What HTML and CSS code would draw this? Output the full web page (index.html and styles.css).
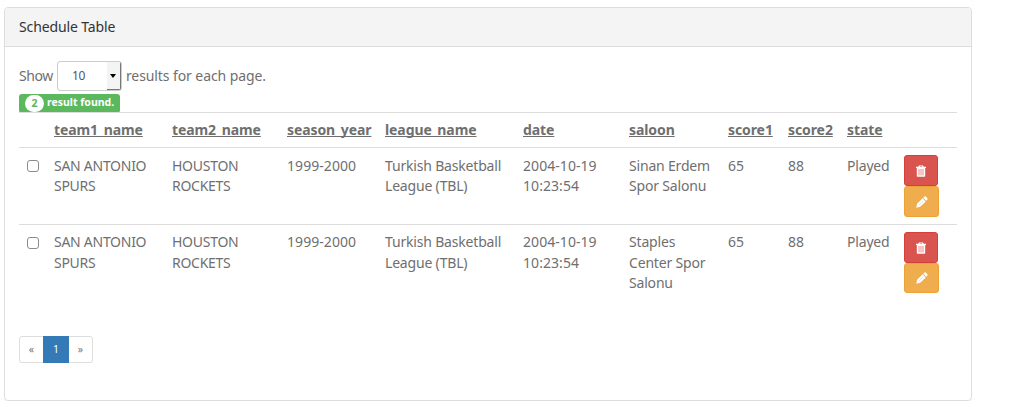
FILE: index.html
```html
<!DOCTYPE html>
<html lang="en">
<head>
<meta charset="utf-8">
<title>Schedule Table</title>
<link rel="stylesheet" href="styles.css">
</head>
<body>
<svg class="defs" width="0" height="0" aria-hidden="true">
  <symbol id="trash" viewBox="0 0 12 12">
    <path fill="#fff" d="M4 .5h4l.8 1.3H11V3H1V1.8h2.200zM5 1.300l-.3.5h2.600L7 1.300zM1.800 3h8.400v8q0 .8-.8.8H2.600q-.8 0-.8-.8z"/>
    <path stroke="#e98b85" d="M4 4v6.500M6 4v6.500M8 4v6.500"/>
  </symbol>
  <symbol id="pencil" viewBox="0 0 12 12">
    <path fill="#fff" d="M.3 11.700l.8-4 5.500-5.400 3.100 3.100-5.500 5.400zM7.200 1.700L8.500.6q.7-.6 1.300 0l1.600 1.600q.6.700 0 1.300l-1.200 1.200z"/>
    <path stroke="#f0ad4e" stroke-width=".4" d="M3.200 8.800l4.200-4.100"/>
  </symbol>
</svg>
<section class="panel">
  <h3 class="panel-heading">Schedule Table</h3>
  <div class="panel-body">
    <div class="length">
      <span>Show</span>
      <span class="select"><span class="select-value">10</span><span class="select-button"></span></span>
      <span class="length-text">results for each page.</span>
    </div>
    <div class="label"><span class="badge">2</span><span>result found.</span></div>
    <table class="table">
      <colgroup><col class="c-check"><col class="c-team1"><col class="c-team2"><col class="c-season"><col class="c-league"><col class="c-date"><col class="c-saloon"><col class="c-score1"><col class="c-score2"><col class="c-state"><col></colgroup>
      <thead>
        <tr><th></th><th><a>team1_name</a></th><th><a>team2_name</a></th><th><a>season_year</a></th><th><a>league_name</a></th><th><a>date</a></th><th><a>saloon</a></th><th><a>score1</a></th><th><a>score2</a></th><th><a>state</a></th><th></th></tr>
      </thead>
      <tbody>
        <tr class="first"><td><span class="check"></span></td><td class="team">SAN ANTONIO<br>SPURS</td><td class="team">HOUSTON<br>ROCKETS</td><td class="num">1999-2000</td><td>Turkish Basketball<br>League (TBL)</td><td class="num">2004-10-19<br>10:23:54</td><td>Sinan Erdem<br>Spor Salonu</td><td class="num">65</td><td class="num">88</td><td>Played</td>
          <td class="tools"><div class="actions"><span class="btn danger"><svg><use href="#trash"/></svg></span><span class="btn warning"><svg><use href="#pencil"/></svg></span></div></td></tr>
        <tr><td><span class="check"></span></td><td class="team">SAN ANTONIO<br>SPURS</td><td class="team">HOUSTON<br>ROCKETS</td><td class="num">1999-2000</td><td>Turkish Basketball<br>League (TBL)</td><td class="num">2004-10-19<br>10:23:54</td><td>Staples<br>Center Spor<br>Salonu</td><td class="num">65</td><td class="num">88</td><td>Played</td>
          <td class="tools"><div class="actions"><span class="btn danger"><svg><use href="#trash"/></svg></span><span class="btn warning"><svg><use href="#pencil"/></svg></span></div></td></tr>
      </tbody>
    </table>
    <div class="pagination"><span class="page arrow">«</span><span class="page active">1</span><span class="page arrow">»</span></div>
  </div>
</section>
</body>
</html>
```
FILE: styles.css
```css
* { box-sizing: border-box; }
body { margin: 0; background: #fff; color: #6f6f6f; font: 14px/20px "Noto Sans", "Open Sans", sans-serif; }
.defs { display: block; }
.panel { width: 968px; height: 394px; margin: 7px 0 0 4px; border: 1px solid #ddd; border-radius: 4px; box-shadow: 0 1px 1px rgba(0,0,0,.06); }
.panel-heading { margin: 0; height: 39px; padding: 9px 14px; font-size: 14px; font-weight: 400; letter-spacing: -.13px; color: #333; background: #f4f4f4; border-bottom: 1px solid #ddd; border-radius: 3px 3px 0 0; }
.panel-body { padding: 14px 14px 0; }
.length { display: flex; align-items: center; height: 30px; gap: 4px; letter-spacing: -.4px; }
.length-text { letter-spacing: -.09px; }
.select { display: flex; justify-content: space-between; width: 65px; height: 30px; border: 1px solid #ccc; border-radius: 3px; overflow: hidden; font-size: 12px; line-height: 28px; letter-spacing: -.2px; color: #555; }
.select-value { padding-left: 14px; }
.select-button { width: 14px; background: #f4f4f4; border-right: 1px solid #777; border-bottom: 1px solid #777; display: flex; align-items: center; justify-content: center; }
.select-button::after { content: ""; border: 3px solid transparent; border-top: 4px solid #000; border-bottom: 0; }
.label { display: flex; align-items: center; gap: 3px; width: 101px; height: 19px; margin-top: 3px; padding: 0 0 0 6px; background: #5cb85c; border-radius: 3px; color: #fff; font: bold 10.5px/16px "Noto Sans", sans-serif; letter-spacing: 0; white-space: nowrap; }
.label > span:last-child { padding-bottom: 3px; }
.badge { width: 19px; height: 17px; line-height: 17px; border-radius: 9px; background: #fff; color: #5cb85c; text-align: center; }
.table { width: 938px; margin-top: -1px; border-collapse: separate; border-spacing: 0; table-layout: fixed; letter-spacing: -.18px; }
.table th, .table td { padding: 7px 0 0 8px; text-align: left; vertical-align: top; border-top: 1px solid #ddd; white-space: nowrap; }
.table th { height: 35px; font-weight: 700; letter-spacing: -.09px; }
.table td { height: 77px; line-height: 20.5px; }
.table .first td { padding-top: 8px; line-height: 20px; }
.table .first .check { margin-top: 4px; }
.table .first .tools { padding-top: 7px; }
.table td.team { letter-spacing: -.27px; }
.table td.num { letter-spacing: .06px; }
.table th a { text-decoration: underline; text-underline-offset: 1px; text-decoration-thickness: 1px; text-decoration-skip-ink: none; }
.c-check { width: 27px; }
.c-team1 { width: 118px; }
.c-team2 { width: 115px; }
.c-season { width: 98px; }
.c-league { width: 138px; }
.c-date { width: 106px; }
.c-saloon { width: 99px; }
.c-score1 { width: 60px; }
.c-score2 { width: 59px; }
.c-state { width: 57px; }
.check { display: block; width: 12px; height: 12px; margin-top: 5px; border: 1px solid #8c8c8c; border-radius: 3px; }
.actions { display: flex; flex-direction: column; }
.btn { display: flex; align-items: center; justify-content: center; height: 31px; border: 1px solid; border-radius: 3px; }
.btn svg { width: 12px; height: 12px; }
.danger { width: 34px; background: #d9534f; border-color: #d43f3a; }
.warning { width: 35px; background: #f0ad4e; border-color: #eea236; }
tr:last-child .warning { height: 30px; }
.pagination { display: flex; width: 74px; height: 27px; margin-top: 35px; border: 1px solid #ddd; border-radius: 3px; font-size: 10.5px; line-height: 25px; }
.page { flex: 1; text-align: center; }
.page.arrow { color: #777; }
.page.active { flex: 0 0 26px; height: 27px; margin-top: -1px; line-height: 27px; background: #337ab7; color: #fff; }
```
